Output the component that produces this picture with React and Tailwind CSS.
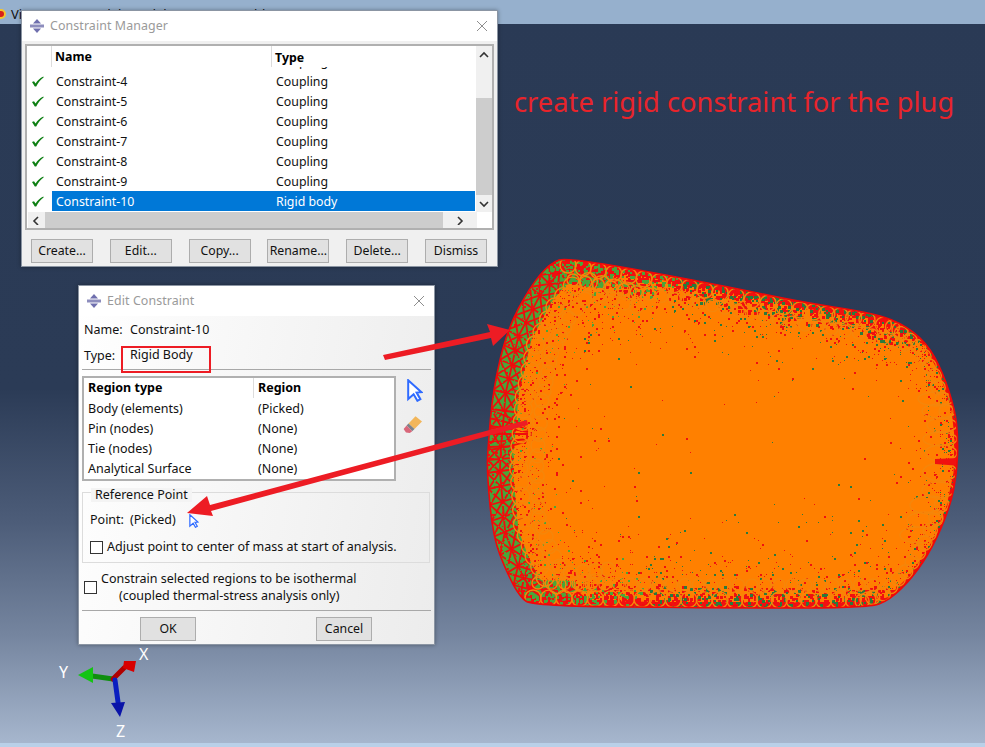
import React from "react";

const leftLine = [[610,264],[568,257],[550,263],[530,287],[507,330],[493,390],[488,447],[487,473],[493,537],[507,573],[520,597],[533,606],[575,607]];
const topLine = [[568,257],[720,285],[800,302],[867,312],[900,322]];
const rightLine = [[900,322],[927,343],[943,373],[955,410],[958,437],[957,473],[950,507],[933,547],[913,577],[890,600],[868,608]];
const bottomLine = [[868,608],[720,608],[533,606]];
const outline = [[568,257],[720,285],[800,302],[867,312],[900,322],[927,343],[943,373],[955,410],[958,437],[957,473],[950,507],[933,547],[913,577],[890,600],[868,608],[720,608],[533,606],[520,597],[507,573],[493,537],[487,473],[488,447],[493,390],[507,330],[530,287],[550,263]];
const toPath = (p) => "M" + p.map((a) => a.join(" ")).join("L");
function smoothClosed(p) {
  const n = p.length;
  const mid = (a, b) => [(a[0] + b[0]) / 2, (a[1] + b[1]) / 2];
  const s = mid(p[n - 1], p[0]);
  let d = `M${s[0]} ${s[1]}`;
  for (let i = 0; i < n; i++) {
    const m = mid(p[i], p[(i + 1) % n]);
    d += `Q${p[i][0]} ${p[i][1]} ${m[0]} ${m[1]}`;
  }
  return d + "Z";
}
const outlinePath = smoothClosed(outline);

function rng(seed) {
  let a = seed;
  return () => {
    a |= 0; a = (a + 0x6d2b79f5) | 0;
    let t = Math.imul(a ^ (a >>> 15), 1 | a);
    t = (t + Math.imul(t ^ (t >>> 7), 61 | t)) ^ t;
    return ((t ^ (t >>> 14)) >>> 0) / 4294967296;
  };
}
function segDist(x, y, l) {
  let best = 1e9;
  for (let i = 0; i < l.length - 1; i++) {
    const [ax, ay] = l[i], [bx, by] = l[i + 1];
    const dx = bx - ax, dy = by - ay;
    let t = ((x - ax) * dx + (y - ay) * dy) / (dx * dx + dy * dy);
    t = Math.max(0, Math.min(1, t));
    const d = Math.hypot(x - ax - t * dx, y - ay - t * dy);
    if (d < best) best = d;
  }
  return best;
}
function resample(l, s) {
  const out = [];
  for (let i = 0; i < l.length - 1; i++) {
    const [ax, ay] = l[i], [bx, by] = l[i + 1];
    const len = Math.hypot(bx - ax, by - ay), n = Math.max(1, Math.round(len / s));
    for (let k = 0; k < n; k++) out.push([ax + ((bx - ax) * k) / n, ay + ((by - ay) * k) / n]);
  }
  out.push(l[l.length - 1]);
  return out;
}
function inward(p, c = [720, 440]) {
  const d = Math.hypot(c[0] - p[0], c[1] - p[1]);
  return [(c[0] - p[0]) / d, (c[1] - p[1]) / d];
}

function buildMesh() {
  const r = rng(42);
  let red = "", green = "", lime = "";
  for (let y = 256; y < 610; y += 2) {
    for (let x = 486; x < 960; x += 2) {
      const a = r();
      const dT = segDist(x, y, topLine), dB = segDist(x, y, bottomLine), dL = segDist(x, y, leftLine), dR = segDist(x, y, rightLine);
      const dRim = Math.min(dT, dB);
      const sz = dRim < 24 ? (a < 0.5 ? 3 : 2) : a < 0.6 ? 1 : 2;
      const lf = dL < 22 ? 0.12 : 0.85;
      const pR = 0.7 * Math.exp(-dT / 9) + 0.16 * Math.exp(-dT / 24) + 0.7 * Math.exp(-dB / 9) + 0.16 * Math.exp(-dB / 22) + lf * Math.exp(-dL / 21) + 0.42 * Math.exp(-dR / 13) + 0.0005;
      const pG = 0.2 * Math.exp(-dT / 20) + 0.2 * Math.exp(-dB / 20) + 0.14 * Math.exp(-dL / 26) + 0.13 * Math.exp(-dR / 15) + 0.0007;
      const b = r();
      const cell = `M${x} ${y}h${sz}v${sz}h-${sz}z`;
      if (b < pR) red += cell;
      else if (b < pR + pG) {
        if (dL < 70) lime += cell; else green += cell;
      }
    }
  }
  return { red, green, lime };
}
const mesh = buildMesh();
const leftPts = resample(leftLine, 17);
const circleRows = [
  ...resample(topLine, 15).map((p) => [p[0], p[1] + 8, 8]),
  ...resample(topLine, 13).map((p) => [p[0] + 5, p[1] + 23, 6]),
  ...resample(bottomLine, 15).map((p) => [p[0], p[1] - 8, 8]),
  ...resample(bottomLine, 13).map((p) => [p[0] + 5, p[1] - 23, 6]),
  ...resample(leftLine, 15).map((p) => { const n = inward(p); return [p[0] + n[0] * 32, p[1] + n[1] * 32, 9]; }),
  ...resample(leftLine, 13).map((p) => { const n = inward(p); return [p[0] + n[0] * 50, p[1] + n[1] * 50, 7]; }),
  ...resample(rightLine.slice(0, 4), 13).map((p) => { const n = inward(p); return [p[0] + n[0] * 9, p[1] + n[1] * 9, 7]; }),
  ...resample(rightLine.slice(6), 13).map((p) => { const n = inward(p); return [p[0] + n[0] * 9, p[1] + n[1] * 9, 7]; }),
];
const bulges = [[936,399,18,7],[939,411,17,7],[942,425,15,7],[940,439,17,7],[941,453,16,8],[940,472,17,9],[938,490,16,8],[930,505,20,9],[925,520,18,8],[918,535,18,8]];
const ribs = [[410,6],[418,4],[426,2],[434,0],[442,-1],[450,-3]];

function Mesh() {
  return (
    <>
      <clipPath id="meshClip"><path d={outlinePath} /></clipPath>
      <path d={outlinePath} fill="#ff8000" />
      <g clipPath="url(#meshClip)">
        <path d={toPath(leftLine)} fill="none" stroke="#4aa53a" strokeWidth="52" />
        <path d={toPath(topLine)} fill="none" stroke="#f00c0c" strokeWidth="11" />
        <path d={toPath(bottomLine)} fill="none" stroke="#f00c0c" strokeWidth="11" />
        <path d={toPath(rightLine)} fill="none" stroke="#f00c0c" strokeWidth="7" />
        <g stroke="#f00c0c" strokeWidth="1.8" fill="none">
          {leftPts.slice(0, -1).map((p, i) => {
            const q = leftPts[i + 1], n = inward(p);
            return (
              <g key={i}>
                <line x1={p[0]} y1={p[1]} x2={q[0] + n[0] * 13} y2={q[1] + n[1] * 13} />
                <line x1={q[0]} y1={q[1]} x2={p[0] + n[0] * 13} y2={p[1] + n[1] * 13} />
                <line x1={p[0] + n[0] * 13} y1={p[1] + n[1] * 13} x2={q[0] + n[0] * 26} y2={q[1] + n[1] * 26} />
                <line x1={q[0] + n[0] * 13} y1={q[1] + n[1] * 13} x2={p[0] + n[0] * 26} y2={p[1] + n[1] * 26} />
                <line x1={p[0]} y1={p[1]} x2={p[0] + n[0] * 26} y2={p[1] + n[1] * 26} />
                <line x1={p[0] + n[0] * 13} y1={p[1] + n[1] * 13} x2={q[0] + n[0] * 13} y2={q[1] + n[1] * 13} />
              </g>
            );
          })}
          {ribs.map((b, i) => <path key={i} d={`M489 ${b[0]}Q510 ${b[0] + b[1]} 528 ${b[0] + b[1] * 3}`} />)}
        </g>
        <path d={mesh.red} fill="#f01010" />
        <path d={mesh.lime} fill="#4aa53a" />
        <path d={mesh.green} fill="#2b7a3c" />
        <g fill="none" stroke="#f5860a" strokeWidth="1.4">
          {circleRows.map((c, i) => <circle key={i} cx={c[0]} cy={c[1]} r={c[2]} />)}
          {bulges.map((c, i) => <ellipse key={i} cx={c[0]} cy={c[1]} rx={c[2]} ry={c[3]} />)}
        </g>
        <path d="M935 459 L960 458 L960 466 L935 464 Z" fill="#f01010" />
      </g>
      <path d={outlinePath} fill="none" stroke="#f00808" strokeWidth="1.6" />
    </>
  );
}

function AppIcon() {
  return (
    <svg width="16" height="16" viewBox="0 0 16 16" className="shrink-0">
      <path d="M8 1 L12 5.5 H4 Z" fill="#6f6fae" />
      <path d="M8 15 L12 10.5 H4 Z" fill="#6f6fae" />
      <rect x="1" y="6.5" width="14" height="3" fill="#8d8dbd" />
    </svg>
  );
}
function CloseIcon() {
  return (
    <svg width="12" height="12" viewBox="0 0 12 12" className="shrink-0">
      <path d="M1 1 L11 11 M11 1 L1 11" stroke="#8e8e8e" strokeWidth="1" fill="none" />
    </svg>
  );
}
function Check() {
  return (
    <svg width="13" height="11" viewBox="0 0 13 11">
      <path d="M1 6 L3 5.2 L4.6 7.6 C6.5 4.6 9 2 12.4 0.6 L12.6 1.4 C9.6 3.6 7.2 6.4 5.2 10.4 L3.8 10.4 Z" fill="#0d7f12" />
    </svg>
  );
}
function Cursor({ w, h }) {
  return (
    <svg width={w} height={h} viewBox="0 0 16 23">
      <path d="M1.2 1.2 L14.5 13.2 L9.6 13.6 L13.4 20.2 L10.4 21.8 L6.6 15.2 L1.2 20 Z" fill="#fff" stroke="#2f6bff" strokeWidth="2" strokeLinejoin="miter" />
    </svg>
  );
}
function Eraser() {
  return (
    <svg width="20" height="19" viewBox="0 0 20 19">
      <path d="M12.5 1.2 L19 6.5 L11.5 14 L5.5 8.5 Z" fill="#f2b65a" />
      <path d="M5.5 8.5 L11.5 14 L9.2 16.2 L3.6 10.6 Z" fill="#7d8288" />
      <path d="M3.6 10.6 L9.2 16.2 L6.8 18 L3 17.4 L0.6 14 Z" fill="#d9677a" />
    </svg>
  );
}
function Chevron({ d }) {
  const paths = { up: "M1 6 L5 2 L9 6", down: "M1 2 L5 6 L9 2", left: "M6 1 L2 5 L6 9", right: "M3 1 L7 5 L3 9" };
  return (
    <svg width="10" height="10" viewBox="0 0 10 8" className="shrink-0">
      <path d={paths[d]} fill="none" stroke="#333" strokeWidth="1.6" />
    </svg>
  );
}
function Btn({ children, w }) {
  return (
    <div className={`${w} h-[24px] flex items-center justify-center bg-[#e1e1e1] border border-[#adadad] text-[12.3px] text-[#111]`}>
      {children}
    </div>
  );
}
function Box() {
  return <span className="block w-[13px] h-[13px] bg-white border border-[#333] shrink-0" />;
}
function Title({ children }) {
  return (
    <div className="h-[30px] bg-white flex items-center pl-[7px] pr-[9px] shrink-0">
      <AppIcon />
      <span className="ml-[5px] text-[12.4px] text-[#9a9a9a] flex-1 tracking-[0.1px]">{children}</span>
      <CloseIcon />
    </div>
  );
}

const rows = [
  ["Constraint-3", "Coupling"], ["Constraint-4", "Coupling"], ["Constraint-5", "Coupling"], ["Constraint-6", "Coupling"],
  ["Constraint-7", "Coupling"], ["Constraint-8", "Coupling"], ["Constraint-9", "Coupling"], ["Constraint-10", "Rigid body"],
];
const regions = [["Body (elements)", "(Picked)"], ["Pin (nodes)", "(None)"], ["Tie (nodes)", "(None)"], ["Analytical Surface", "(None)"]];

function ConstraintManager() {
  return (
    <div className="absolute left-[21px] top-[10px] w-[477px] h-[257px] flex flex-col bg-[#f0f0f0] border border-[#8b95a3] shadow-[0_0_4px_rgba(0,0,0,0.35)]">
      <Title>Constraint Manager</Title>
      <div className="mx-[3px] mt-[3px] h-[186px] border-2 border-[#b0b0b0] bg-white flex flex-col overflow-hidden">
        <div className="flex flex-1 min-h-0">
          <div className="w-[449px] flex flex-col min-h-0">
            <div className="h-[21px] flex font-bold text-[12.35px] shrink-0 text-black relative z-10 bg-white">
              <div className="w-[25px] border-r border-[#dcdcdc]" />
              <div className="w-[220px] pl-[3px] border-r border-[#dcdcdc] leading-[22px]">Name</div>
              <div className="pl-[3px] leading-[24px]">Type</div>
            </div>
            <div className="overflow-hidden flex-1">
              <div className="mt-[-16px]">
                {rows.map((r, i) => {
                  const sel = r[0] === "Constraint-10";
                  return (
                    <div key={r[0]} className="h-[20px] flex items-center text-[12.35px]">
                      <div className="w-[25px] flex justify-center items-center pr-[4px]">{i > 0 && <Check />}</div>
                      <div className={`flex flex-1 h-full items-center ${sel ? "bg-[#0078d7] text-white" : "text-[#111]"}`}>
                        <div className="w-[220px] pl-[4px] pt-[2px]">{r[0]}</div>
                        <div className="pl-[4px] pt-[2px]">{r[1]}</div>
                      </div>
                    </div>
                  );
                })}
              </div>
            </div>
          </div>
          <div className="w-[16px] ml-[1px] bg-[#f0f0f0] flex flex-col items-center relative">
            <div className="h-[17px] flex items-center justify-center"><Chevron d="up" /></div>
            <div className="flex-1 w-full flex flex-col pt-[35px]">
              <div className="h-[97px] w-full bg-[#cdcdcd]" />
            </div>
            <div className="h-[17px] flex items-center justify-center"><Chevron d="down" /></div>
          </div>
        </div>
        <div className="h-[16px] w-[449px] ml-[1px] bg-[#f0f0f0] flex items-center shrink-0">
          <div className="w-[17px] flex justify-center"><Chevron d="left" /></div>
          <div className="w-[398px] h-full bg-[#cdcdcd]" />
          <div className="flex-1 flex justify-center"><Chevron d="right" /></div>
        </div>
      </div>
      <div className="flex justify-between pl-[9px] pr-[10px] mt-[9px]">
        <Btn w="w-[62px]">Create...</Btn>
        <Btn w="w-[62px]">Edit...</Btn>
        <Btn w="w-[62px]">Copy...</Btn>
        <Btn w="w-[62px]">Rename...</Btn>
        <Btn w="w-[62px]">Delete...</Btn>
        <Btn w="w-[62px]">Dismiss</Btn>
      </div>
    </div>
  );
}

function EditConstraint() {
  return (
    <div className="absolute left-[78px] top-[285px] w-[357px] h-[360px] flex flex-col bg-[linear-gradient(100deg,#ffffff,#ececec)] border border-[#8b95a3] shadow-[0_0_4px_rgba(0,0,0,0.35)] text-[12.5px] text-[#111]">
      <Title>Edit Constraint</Title>
      <div className="flex pl-[5px] mt-[4px] h-[20px] items-center">
        <span className="w-[46px]">Name:</span><span>Constraint-10</span>
      </div>
      <div className="flex pl-[5px] mt-[6px] h-[20px] items-center">
        <span className="w-[46px]">Type:</span><span className="relative top-[-1px]">Rigid Body</span>
      </div>
      <div className="mx-[3px] mt-[3px] h-px bg-[#a8a8a8]" />
      <div className="flex mt-[6px]">
        <div className="ml-[3px] w-[314px] h-[105px] border-2 border-[#b0b0b0] bg-white shrink-0">
          <div className="flex h-[20px] font-bold text-black items-center">
            <div className="w-[170px] pl-[4px] h-full border-r border-[#dcdcdc] leading-[20px]">Region type</div>
            <div className="pl-[4px]">Region</div>
          </div>
          {regions.map((r) => (
            <div key={r[0]} className="flex h-[20px] items-center pt-[2px]">
              <div className="w-[170px] pl-[4px]">{r[0]}</div>
              <div className="pl-[4px]">{r[1]}</div>
            </div>
          ))}
        </div>
        <div className="ml-[11px] flex flex-col">
          <div className="mt-[3px] h-[24px]"><Cursor w={16} h={23} /></div>
          <div className="mt-[12px] ml-[-4px]"><Eraser /></div>
        </div>
      </div>
      <div className="relative mx-[3px] mt-[11px] w-[348px] h-[71px] border border-[#dcdcdc] px-[7px]">
        <span className="absolute left-[8px] top-[-5px] bg-[#f4f4f4] px-[4px] leading-[14px]">Reference Point</span>
        <div className="flex items-center h-[20px] mt-[17px]">
          <span className="w-[40px]">Point:</span><span>(Picked)</span>
          <span className="ml-[13px] mt-[2px] flex"><Cursor w={10} h={14} /></span>
        </div>
        <div className="flex items-center mt-[7px] h-[20px]">
          <Box /><span className="ml-[4px]">Adjust point to center of mass at start of analysis.</span>
        </div>
      </div>
      <div className="flex items-center ml-[5px] mt-[7px] h-[34px]">
        <Box />
        <div className="ml-[4px] leading-[17px]">
          <div>Constrain selected regions to be isothermal</div>
          <div className="pl-[18px]">(coupled thermal-stress analysis only)</div>
        </div>
      </div>
      <div className="mx-[3px] mt-[6px] h-px bg-[#a8a8a8]" />
      <div className="flex mt-[6px] pl-[61px]">
        <Btn w="w-[56px]">OK</Btn>
        <div className="w-[120px]" />
        <Btn w="w-[56px]">Cancel</Btn>
      </div>
    </div>
  );
}

export default function App() {
  return (
    <div className="relative w-[985px] h-[747px] overflow-hidden font-['Noto_Sans',sans-serif] bg-[linear-gradient(180deg,#2a3a55_0%,#2b3b56_52%,#4d5d79_70%,#75859f_85%,#a8b8cf_100%)]">
      <div className="h-[24px] bg-[#96b0cd] flex items-start pt-[5px] text-[13px] text-[#111]">
        <span className="w-[10px] h-[10px] ml-[-4px] mt-[4px] rounded-full bg-[#d8201a] border-2 border-[#f4c430] shrink-0" />
        <span className="ml-[5px] whitespace-nowrap">Viewport: 1   Model: Model-1   Part: Assembly</span>
      </div>
      <div className="absolute left-0 right-0 bottom-0 h-[4px] bg-[#b9d0e8]" />

      <svg className="absolute inset-0" width="985" height="747" viewBox="0 0 985 747">
        <Mesh />
        <g strokeLinecap="round">
          <line x1="113" y1="679" x2="92" y2="676" stroke="#0f8f0f" strokeWidth="5" />
          <path d="M78 675 L93 667 L93 683 Z" fill="#14c414" />
          <line x1="113" y1="679" x2="124" y2="668" stroke="#b00000" strokeWidth="5" />
          <path d="M136 661 L134 672 L123 668 L124 661 Z" fill="#d80000" />
          <line x1="115" y1="680" x2="118" y2="702" stroke="#0a1ec0" strokeWidth="5" />
          <path d="M120 717 L111 703 L125 702 Z" fill="#0a14a8" />
        </g>
        <g fill="#fff" fontFamily="'Noto Sans',sans-serif" fontSize="16">
          <text x="139" y="660">X</text>
          <text x="59" y="678">Y</text>
          <text x="116" y="737">Z</text>
        </g>
      </svg>

      <ConstraintManager />
      <EditConstraint />

      <div className="absolute left-[514px] top-[84px] text-[27.3px] leading-[36px] text-[#e8242b] whitespace-nowrap">create rigid constraint for the plug</div>

      <svg className="absolute inset-0 pointer-events-none" width="985" height="747" viewBox="0 0 985 747">
        <rect x="122" y="347" width="88" height="25" fill="none" stroke="#ed1c24" strokeWidth="2" />
        <path d="M383 355 L490 332 L487 324 L510 330 L493 346 L491 338 L385 360 Z" fill="#ed1c24" />
        <path d="M527 420 L210 505 L207 496 L187 513 L213 516 L211 511 L528 425 Z" fill="#ed1c24" />
      </svg>
    </div>
  );
}
